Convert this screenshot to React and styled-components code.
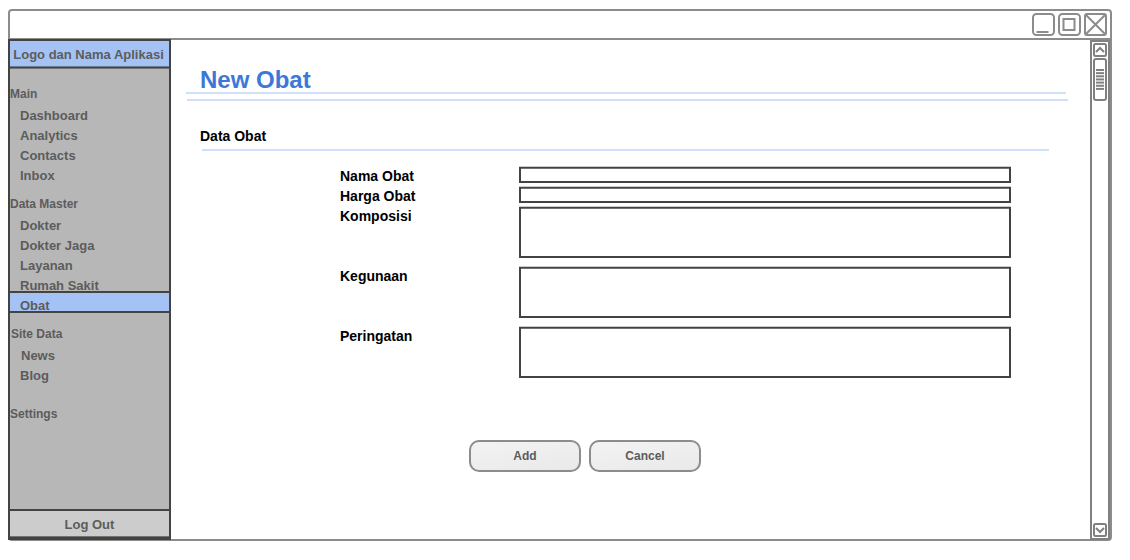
import React from "react";
import styled, { createGlobalStyle } from "styled-components";

const GlobalStyle = createGlobalStyle`
  * { box-sizing: border-box; }
  body {
    margin: 0;
    background: #fff;
    font-family: "Liberation Sans", Arial, sans-serif;
    font-weight: bold;
  }
`;

const line = "#8c8c8c";
const dark = "#434343";
const muted = "#5c5c5c";

const Window = styled.div`
  display: flex;
  flex-direction: column;
  width: 1104px;
  height: 532px;
  margin: 9px 0 0 8px;
  border: 2px solid ${line};
  border-radius: 4px;
`;

const TitleBar = styled.header`
  display: flex;
  justify-content: flex-end;
  gap: 2px;
  height: 29px;
  padding: 1px 2px 0 0;
  border-bottom: 2px solid ${line};
  flex: none;
`;

const WindowIcon = styled.svg`
  display: block;
  width: 24px;
  height: 25px;
  fill: none;
  stroke: ${line};
  stroke-width: 2;
`;

const Body = styled.div`
  display: flex;
  flex: 1;
  min-height: 0;
`;

const Sidebar = styled.aside`
  display: flex;
  flex-direction: column;
  flex: none;
  width: 163px;
  height: 501px;
  margin: -1px 0 0 -2px;
  border: 2px solid ${dark};
  border-bottom-width: 3px;
  background: #b7b7b7;
  color: ${muted};
  font-size: 13px;
`;

const Brand = styled.div`
  height: 27px;
  padding-right: 2px;
  border-bottom: 1px solid ${dark};
  box-shadow: 0 1px 0 #737373, inset 0 -1px 0 #6c7a92;
  background: #a4c2f4;
  line-height: 27px;
  text-align: center;
  white-space: nowrap;
`;

const Group = styled.nav`
  display: flex;
  flex-direction: column;
  margin-top: ${(p) => p.$gap}px;
`;

const GroupTitle = styled.div`
  height: 22px;
  padding-left: ${(p) => (p.$shift ? 1 : 0)}px;
  font-size: 12px;
  line-height: 20px;
`;

const Item = styled.a`
  height: 20px;
  padding-left: ${(p) => (p.$shift ? 11 : 10)}px;
  line-height: 20px;
`;

const ActiveItem = styled(Item)`
  height: 22px;
  margin-top: -5px;
  border-top: 2px solid ${dark};
  border-bottom: 2px solid ${dark};
  background: #a4c2f4;
  line-height: 26px;
`;

const LogOut = styled.div`
  height: 28px;
  margin-top: auto;
  border-top: 2px solid ${dark};
  border-bottom: 1px solid #737373;
  background: #cccccc;
  line-height: 27px;
  text-align: center;
`;

const Content = styled.main`
  flex: 1;
  padding: 24px 0 0 15px;
`;

const Title = styled.h1`
  height: 28px;
  margin: 0 0 0 14px;
  color: #3c78d8;
  font-size: 24px;
  line-height: 31px;
`;

const Rule = styled.hr`
  width: ${(p) => p.$width}px;
  height: 2px;
  margin: 0 0 ${(p) => p.$below}px ${(p) => p.$left}px;
  border: 0;
  background: #d0e0fa;
`;

const Subtitle = styled.h2`
  height: 22px;
  margin: 0 0 0 14px;
  font-size: 14px;
  line-height: 18px;
`;

const Form = styled.form`
  display: flex;
  flex-direction: column;
  margin-left: 154px;
`;

const Field = styled.label`
  display: flex;
  height: ${(p) => (p.$tall ? 60 : 20)}px;
  font-size: 14px;
  line-height: 20px;
`;

const FieldName = styled.span`
  width: 179px;
`;

const Input = styled.span`
  width: 492px;
  height: ${(p) => (p.$tall ? 51 : 16)}px;
  margin-top: 1px;
  border: 2px solid ${dark};
  border-top-width: 1px;
  box-shadow: 0 -1px 0 #cccccc, inset 0 1px 0 #737373;
`;

const Actions = styled.div`
  display: flex;
  gap: 8px;
  margin: 54px 0 0 129px;
`;

const Button = styled.button`
  width: 112px;
  height: 32px;
  padding: 0;
  border: 2px solid ${line};
  border-radius: 10px;
  background: linear-gradient(170deg, #f3f3f3, #e9e9e9);
  color: ${muted};
  font: bold 12px "Liberation Sans", Arial, sans-serif;
`;

const ScrollBar = styled.div`
  display: flex;
  flex-direction: column;
  flex: none;
  width: 20px;
  height: 500px;
  padding: 1px;
  border: 2px solid #808080;
`;

const ScrollArrow = styled.svg`
  display: block;
  width: 14px;
  height: 14px;
  fill: none;
  stroke: #808080;
  stroke-width: 2;
`;

const Thumb = styled.div`
  width: 14px;
  height: 43px;
  margin: 1px 0 auto;
  padding: 9px 1px 0;
  border: 2px solid #808080;
  border-radius: 3px;
`;

const Grip = styled.svg`
  display: block;
  width: 8px;
  height: 21px;
  stroke: #808080;
  stroke-width: 2;
`;

const gripLines = [0, 1, 2, 3, 4, 5, 6];

const fields = [
  { name: "Nama Obat" },
  { name: "Harga Obat" },
  { name: "Komposisi", tall: true },
  { name: "Kegunaan", tall: true },
  { name: "Peringatan", tall: true },
];

export default function App() {
  return (
    <>
      <GlobalStyle />
      <Window>
        <TitleBar>
          <WindowIcon viewBox="0 0 24 25">
            <rect x="1" y="2" width="21" height="21" rx="3.5" />
            <path d="M4.5 20H16.5" />
          </WindowIcon>
          <WindowIcon viewBox="0 0 24 25">
            <rect x="1" y="2" width="21" height="21" rx="3.5" />
            <rect x="5.5" y="7" width="11" height="11" />
          </WindowIcon>
          <WindowIcon viewBox="0 0 24 25">
            <rect x="1" y="2" width="21" height="21" rx="2" />
            <path d="M1.500 2.500L21.500 22.500M21.500 2.500L1.500 22.500" />
          </WindowIcon>
        </TitleBar>
        <Body>
          <Sidebar>
            <Brand>Logo dan Nama Aplikasi</Brand>
            <Group $gap={16}>
              <GroupTitle>Main</GroupTitle>
              <Item>Dashboard</Item>
              <Item>Analytics</Item>
              <Item>Contacts</Item>
              <Item>Inbox</Item>
            </Group>
            <Group $gap={8}>
              <GroupTitle>Data Master</GroupTitle>
              <Item>Dokter</Item>
              <Item>Dokter Jaga</Item>
              <Item>Layanan</Item>
              <Item>Rumah Sakit</Item>
              <ActiveItem>Obat</ActiveItem>
            </Group>
            <Group $gap={11}>
              <GroupTitle $shift>Site Data</GroupTitle>
              <Item $shift>News</Item>
              <Item>Blog</Item>
            </Group>
            <Group $gap={18}>
              <GroupTitle>Settings</GroupTitle>
            </Group>
            <LogOut>Log Out</LogOut>
          </Sidebar>
          <Content>
            <Title>New Obat</Title>
            <Rule $left={0} $width={880} $below={5} />
            <Rule $left={1} $width={881} $below={26} />
            <Subtitle>Data Obat</Subtitle>
            <Rule $left={16} $width={847} $below={15} />
            <Form>
              {fields.map((f) => (
                <Field key={f.name} $tall={f.tall}>
                  <FieldName>{f.name}</FieldName>
                  <Input $tall={f.tall} />
                </Field>
              ))}
              <Actions>
                <Button type="button">Add</Button>
                <Button type="button">Cancel</Button>
              </Actions>
            </Form>
          </Content>
          <ScrollBar>
            <ScrollArrow viewBox="0 0 14 14">
              <rect x="1" y="1" width="12" height="12" rx="1.500" />
              <path d="M3 9L7 5L11 9" />
            </ScrollArrow>
            <Thumb>
              <Grip viewBox="0 0 8 21">
                {gripLines.map((i) => (
                  <path key={i} d={`M0 ${1 + i * 3.15}H8`} />
                ))}
              </Grip>
            </Thumb>
            <ScrollArrow viewBox="0 0 14 14">
              <rect x="1" y="1" width="12" height="12" rx="1.500" />
              <path d="M3 5L7 9L11 5" />
            </ScrollArrow>
          </ScrollBar>
        </Body>
      </Window>
    </>
  );
}
